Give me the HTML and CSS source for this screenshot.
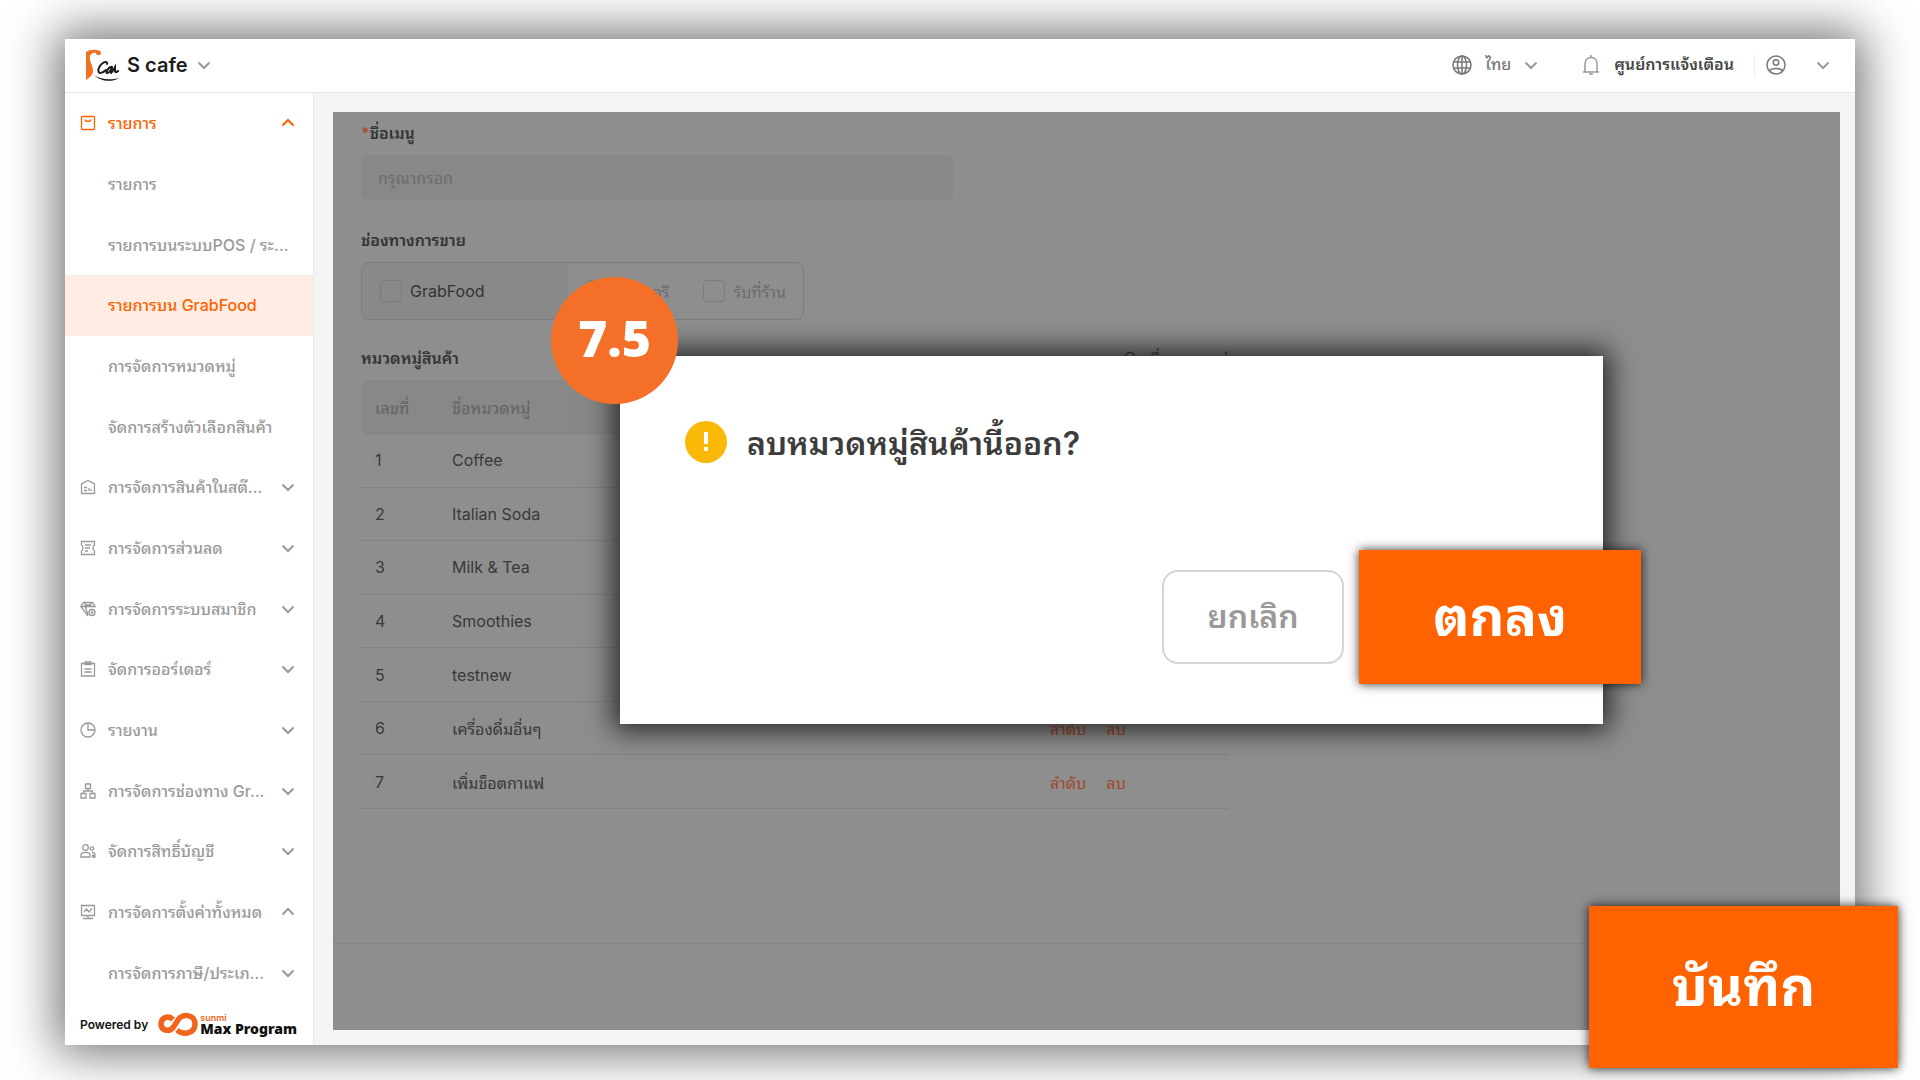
FILE: index.html
```html
<!DOCTYPE html>
<html lang="th">
<head>
    <meta charset="UTF-8">
    <meta name="viewport" content="width=device-width, initial-scale=1.0">
    <title>S cafe - รายการบน GrabFood</title>
    <link rel="stylesheet" href="styles.css">
</head>
<body>
    <!-- chevron shared by the header and the menu -->
    <svg class="defs" width="0" height="0">
        <symbol id="chevron" viewBox="0 0 14 14"><path d="M1.5 4.5L7 10L12.5 4.5" fill="none" stroke="currentColor" stroke-width="2"/></symbol>
    </svg>

    <div class="window">
        <header class="topbar">
            <svg class="logo" viewBox="0 0 34 32">
                <path d="M1 3C5 0 16 0 16 4C16 7 11 7 11 4C7 3 4 6 5 11C6 15 8 18 8 22C8 26 5 28 1 31Z" fill="#f37021"/>
                <path d="M22 15C23 11 16 13 13.5 20C12.5 26 18 24 21 21M27 18C24 17 20 24 22 24C24 24 26 21 27 18L26 24M27 23L30 18L30 22C30 24 32 23 33 22" fill="none" stroke="#1c1c1c" stroke-width="2" stroke-linecap="round"/>
                <path d="M9 26C16 31 26 31 34 29C26 34 15 32 9 26Z" fill="#1c1c1c"/>
            </svg>
            <button class="shop" type="button">S cafe <svg class="chevron"><use href="#chevron"/></svg></button>

            <button class="lang" type="button">
                <svg class="top-icon" viewBox="0 0 20 20" fill="none" stroke="currentColor" stroke-width="1.5"><circle cx="10" cy="10" r="9"/><ellipse cx="10" cy="10" rx="4.5" ry="9"/><path d="M1.5 7H18.5M1.5 13H18.5M10 1V19"/></svg>
                <span>ไทย</span>
                <svg class="chevron"><use href="#chevron"/></svg>
            </button>
            <button class="notice" type="button">
                <svg class="top-icon light" viewBox="0 0 20 20" fill="none" stroke="currentColor" stroke-width="1.5"><path d="M2 17H18M4 17V9C4 5 6.5 2.5 10 2.5S16 5 16 9V17M10 0V2.5M8 19H12"/></svg>
                <span>ศูนย์การแจ้งเตือน</span>
            </button>
            <button class="account" type="button" aria-label="บัญชี">
                <svg class="top-icon" viewBox="0 0 20 20" fill="none" stroke="currentColor" stroke-width="1.5"><circle cx="10" cy="10" r="9"/><circle cx="10" cy="7.5" r="2.7"/><path d="M3.5 16C5 12.5 15 12.5 16.5 16"/></svg>
                <svg class="chevron"><use href="#chevron"/></svg>
            </button>
        </header>

        <div class="body">
            <aside class="sidebar">
                <nav class="menu">
                    <a class="item open" href="#">
                        <svg class="icon" viewBox="0 0 16 16"><rect x="1.5" y="1.5" width="13" height="13" rx="1"/><path d="M5 4.5C5.5 7 10.5 7 11 4.5"/></svg>
                        <span>รายการ</span><svg class="chevron up"><use href="#chevron"/></svg>
                    </a>
                    <a class="item sub" href="#"><span>รายการ</span></a>
                    <a class="item sub" href="#"><span>รายการบนระบบPOS / ระ...</span></a>
                    <a class="item sub active" href="#"><span>รายการบน GrabFood</span></a>
                    <a class="item sub" href="#"><span>การจัดการหมวดหมู่</span></a>
                    <a class="item sub" href="#"><span>จัดการสร้างตัวเลือกสินค้า</span></a>
                    <a class="item" href="#">
                        <svg class="icon" viewBox="0 0 16 16"><path d="M1.5 14.5V5L8 1.5L14.5 5V14.5ZM4 8.5H7M4 11.5H7M9 9V12M11 10V12"/></svg>
                        <span>การจัดการสินค้าในสต๊...</span><svg class="chevron"><use href="#chevron"/></svg>
                    </a>
                    <a class="item" href="#">
                        <svg class="icon" viewBox="0 0 16 16"><path d="M1.5 1.5H14.5V5C12.5 6 12.5 10 14.5 11V14.5H1.5V11C3.5 10 3.5 6 1.5 5ZM5 5H11M5 8H10M5 11H8"/></svg>
                        <span>การจัดการส่วนลด</span><svg class="chevron"><use href="#chevron"/></svg>
                    </a>
                    <a class="item" href="#">
                        <svg class="icon" viewBox="0 0 16 16"><path d="M3.5 1.5H12.5L15 5.5H1ZM1 5.5L8 15M5 1.5L5.5 6L8 14M11 1.5L10.5 6M5.5 4L11 4"/><circle cx="12" cy="11.5" r="3"/><circle cx="12" cy="11.5" r=".7"/></svg>
                        <span>การจัดการระบบสมาชิก</span><svg class="chevron"><use href="#chevron"/></svg>
                    </a>
                    <a class="item" href="#">
                        <svg class="icon" viewBox="0 0 16 16"><path d="M1.5 2.5H14.5V15H1.5ZM5 .8H11V3.5H5ZM4.5 8H11.5M4.5 11H11.5"/></svg>
                        <span>จัดการออร์เดอร์</span><svg class="chevron"><use href="#chevron"/></svg>
                    </a>
                    <a class="item" href="#">
                        <svg class="icon" viewBox="0 0 16 16"><circle cx="8" cy="8" r="7"/><path d="M8 1V8H15"/></svg>
                        <span>รายงาน</span><svg class="chevron"><use href="#chevron"/></svg>
                    </a>
                    <a class="item" href="#">
                        <svg class="icon" viewBox="0 0 16 16"><path d="M5.5 1H10.5V5.5H5.5ZM1 10.5H6V15H1ZM10 10.5H15V15H10ZM8 5.5V8M3.5 10.5V8H12.5V10.5"/></svg>
                        <span>การจัดการช่องทาง Gr...</span><svg class="chevron"><use href="#chevron"/></svg>
                    </a>
                    <a class="item" href="#">
                        <svg class="icon" viewBox="0 0 16 16"><circle cx="5.5" cy="4.5" r="2.8"/><path d="M1 14V12C1 8.5 10 8.5 10 12V14ZM12 9.5C14 9.5 15 10.5 15 11.5M12 14H15V12.5H12"/><circle cx="12" cy="5.5" r="1.7"/></svg>
                        <span>จัดการสิทธิ์บัญชี</span><svg class="chevron"><use href="#chevron"/></svg>
                    </a>
                    <a class="item" href="#">
                        <svg class="icon" viewBox="0 0 16 16"><path d="M1.5 1.5H14.5V11.5H1.5ZM8 11.5V14.5M3 14.5H13M4 8L6.5 5L9 8L12 4.5"/></svg>
                        <span>การจัดการตั้งค่าทั้งหมด</span><svg class="chevron up"><use href="#chevron"/></svg>
                    </a>
                    <a class="item sub" href="#"><span>การจัดการภาษี/ประเภ...</span><svg class="chevron"><use href="#chevron"/></svg></a>
                </nav>
                <div class="powered">
                    <span>Powered by</span>
                    <svg class="sunmi" viewBox="0 0 40 24"><path d="M15 7.5C10 2.5 3 6 3 12C3 18 11 21 15.5 15L20 8C24 1 37 2 37 12C37 21 26 24 19 18" fill="none" stroke="#f26419" stroke-width="5.5"/></svg>
                    <div class="brand"><small>sunmi</small><b>Max Program</b></div>
                </div>
            </aside>

            <main class="content">
                <form class="panel" id="menuForm">
                    <div class="fields">
                        <label class="title" for="menuName"><i>*</i>ชื่อเมนู</label>
                        <input class="text-input" id="menuName" type="text" placeholder="กรุณากรอก">

                        <div class="title">ช่องทางการขาย</div>
                        <div class="channels">
                            <label class="channel main"><input type="checkbox">GrabFood</label>
                            <label class="channel"><input type="checkbox" disabled>เดลิเวอรี</label>
                            <label class="channel"><input type="checkbox" disabled>รับที่ร้าน</label>
                        </div>

                        <div class="table-head">
                            <div class="title">หมวดหมู่สินค้า</div>
                            <a class="add" href="#"><svg viewBox="0 0 14 14" fill="none" stroke="currentColor" stroke-width="1.5"><circle cx="6" cy="6" r="4.5"/><path d="M9.5 9.5L13 13"/></svg> ชื่อหมวดหมู่</a>
                        </div>
                        <table class="categories">
                            <thead>
                                <tr><th class="no">เลขที่</th><th class="name">ชื่อหมวดหมู่</th><th></th></tr>
                            </thead>
                            <tbody>
                                <tr><td>1</td><td>Coffee</td><td><a href="#">ลำดับ</a><a href="#">ลบ</a></td></tr>
                                <tr><td>2</td><td>Italian Soda</td><td><a href="#">ลำดับ</a><a href="#">ลบ</a></td></tr>
                                <tr><td>3</td><td>Milk &amp; Tea</td><td><a href="#">ลำดับ</a><a href="#">ลบ</a></td></tr>
                                <tr><td>4</td><td>Smoothies</td><td><a href="#">ลำดับ</a><a href="#">ลบ</a></td></tr>
                                <tr><td>5</td><td>testnew</td><td><a href="#">ลำดับ</a><a href="#">ลบ</a></td></tr>
                                <tr><td>6</td><td>เครื่องดื่มอื่นๆ</td><td><a href="#">ลำดับ</a><a href="#">ลบ</a></td></tr>
                                <tr><td>7</td><td>เพิ่มช็อตกาแฟ</td><td><a href="#">ลำดับ</a><a href="#">ลบ</a></td></tr>
                            </tbody>
                        </table>
                    </div>
                    <div class="panel-footer"></div>
                </form>
            </main>
        </div>

        <div class="modal" role="dialog" aria-labelledby="modalTitle">
            <div class="question">
                <svg class="warn" viewBox="0 0 42 42"><circle cx="21" cy="21" r="21" fill="#fbb907"/><path d="M21 11V23M21 26V30" stroke="#fff" stroke-width="4"/></svg>
                <h2 id="modalTitle">ลบหมวดหมู่สินค้านี้ออก?</h2>
            </div>
            <div class="actions">
                <button class="cancel" type="button">ยกเลิก</button>
                <button class="big ok" type="button">ตกลง</button>
            </div>
            <div class="step">7.5</div>
        </div>

        <button class="big save" type="submit" form="menuForm">บันทึก</button>
    </div>
</body>
</html>
```
FILE: styles.css
```css
* {
    box-sizing: border-box;
}

body {
    margin: 0;
    padding: 39px 65px 35px;
    height: 100vh;
    background: #fff;
    overflow: hidden;
    font-family: Inter, "Noto Sans Thai Looped", Loma, "Noto Sans", sans-serif;
    font-size: 16px;
    color: #333;
}

button {
    font: inherit;
    border: none;
    background: none;
    padding: 0;
    cursor: pointer;
}

a {
    text-decoration: none;
    color: inherit;
}

.defs {
    position: absolute;
}

.window {
    position: relative;
    display: flex;
    flex-direction: column;
    height: 100%;
    background: #f4f4f4;
    box-shadow: 0 0 46px 8px rgba(0, 0, 0, 0.56);
}

/* header */
.topbar {
    display: flex;
    align-items: center;
    height: 54px;
    padding: 0 25px 2px 20px;
    background: #fff;
    border-bottom: 1px solid #e6e6e6;
}

.topbar button {
    display: flex;
    align-items: center;
    color: #777;
}

.topbar span {
    line-height: 20px;
    padding-bottom: 2px;
}

.logo {
    width: 34px;
    height: 32px;
    margin-right: 8px;
}

.topbar .shop {
    gap: 9px;
    margin-right: auto;
    font-size: 20px;
    font-weight: 600;
    color: #1c1c1c;
}

.top-icon {
    width: 20px;
    height: 20px;
}

.light {
    color: #999;
}

.chevron {
    flex: none;
    width: 14px;
    height: 14px;
    color: #999;
}

.up {
    transform: rotate(180deg);
}

.topbar .lang {
    gap: 13px;
    margin-right: 43px;
    font-weight: 500;
}

.topbar .notice {
    gap: 13px;
    margin-right: 20px;
    font-weight: 600;
    color: #444;
}

.topbar .account {
    gap: 30px;
    padding-left: 11px;
    border-left: 1px solid #eee;
}

/* left menu */
.body {
    display: flex;
    flex: 1;
    min-height: 0;
}

.sidebar {
    display: flex;
    flex-direction: column;
    width: 249px;
    background: #fff;
    border-right: 1px solid #e8e8e8;
}

.menu {
    display: flex;
    flex-direction: column;
    flex: 1;
}

.item {
    display: flex;
    flex: 1;
    align-items: center;
    gap: 12px;
    padding: 0 18px 0 15px;
    font-weight: 500;
    color: #999;
}

.item span {
    flex: 1;
    white-space: nowrap;
    overflow: hidden;
    line-height: 32px;
}

.sub {
    padding-left: 43px;
}

.open, .open .chevron {
    color: #ff6000;
}

.active {
    background: #ffede3;
    color: #ff6000;
}

.icon {
    width: 16px;
    height: 16px;
    fill: none;
    stroke: currentColor;
    stroke-width: 1.3;
}

.powered {
    display: flex;
    align-items: center;
    height: 42px;
    padding-left: 15px;
    font-size: 12px;
    font-weight: 600;
    color: #111;
}

.sunmi {
    width: 40px;
    height: 24px;
    margin: 0 2px 0 10px;
}

.brand {
    display: flex;
    flex-direction: column;
}

.brand small {
    font-size: 9px;
    line-height: 9px;
    color: #f26419;
}

.brand b {
    font-family: "Noto Sans", sans-serif;
    font-size: 14px;
    font-weight: 900;
    line-height: 13px;
}

/* dimmed form */
.content {
    flex: 1;
    display: flex;
    padding: 19px 15px 15px 19px;
}

.panel {
    flex: 1;
    display: flex;
    flex-direction: column;
    background: #8e8e8e;
}

.fields {
    flex: 1;
    padding: 7px 28px;
}

.title {
    font-weight: 600;
    line-height: 28px;
    color: #333;
}

.title i {
    color: #a8502c;
    font-style: normal;
}

.text-input {
    display: block;
    width: 593px;
    height: 45px;
    margin: 8px 0 26px;
    padding: 0 17px;
    border: none;
    border-radius: 8px;
    background: #888;
    font: inherit;
}

.text-input::placeholder {
    color: #6c6c6c;
}

.channels {
    display: inline-flex;
    height: 58px;
    margin: 8px 0 24px;
    border: 1px solid #7c7c7c;
    border-radius: 8px;
    overflow: hidden;
}

.channel {
    display: flex;
    align-items: center;
    gap: 8px;
    padding: 0 17px;
    color: #6c6c6c;
}

.channel.main {
    width: 206px;
    padding: 0 18px;
    background: #898989;
    color: #333;
}

.channel input {
    appearance: none;
    width: 22px;
    height: 22px;
    margin: 0;
    border: 1px solid #7c7c7c;
    border-radius: 4px;
}

.table-head {
    display: flex;
    justify-content: space-between;
    width: 867px;
    margin-bottom: 8px;
}

.add {
    display: flex;
    align-items: center;
    gap: 12px;
    color: #444;
}

.add svg {
    width: 14px;
    height: 14px;
}

.categories {
    width: 867px;
    height: 429px;
    border-collapse: separate;
    border-spacing: 0;
    table-layout: fixed;
    color: #383838;
}

.categories th, .categories td {
    padding: 0 14px;
    border-bottom: 1px solid #828282;
    text-align: left;
}

.categories th {
    height: 54px;
    background: #888;
    color: #666;
    font-weight: 500;
}

.categories th:first-child {
    border-radius: 8px 0 0 8px;
}

.no {
    width: 77px;
}

.name {
    width: 598px;
}

.categories a {
    margin-right: 20px;
    color: #a04a28;
}

.panel-footer {
    height: 87px;
    border-top: 1px solid #868686;
}

/* confirm dialog */
.modal {
    position: absolute;
    top: 317px;
    left: 555px;
    width: 983px;
    height: 368px;
    padding: 54px 0 0 65px;
    background: #fff;
    box-shadow: 0 0 26px 6px rgba(0, 0, 0, 0.75);
}

.question {
    display: flex;
    align-items: center;
    gap: 20px;
    height: 64px;
}

.warn {
    width: 42px;
    height: 42px;
}

.question h2 {
    margin: 0;
    padding-bottom: 4px;
    font-size: 32px;
    font-weight: 600;
    color: #3c3c3c;
}

.actions {
    display: flex;
    align-items: center;
    justify-content: flex-end;
    gap: 15px;
    margin: 76px -38px 0 0;
}

.cancel {
    width: 182px;
    height: 94px;
    padding-bottom: 8px;
    border: 2px solid #d4d4d4;
    border-radius: 16px;
    font-size: 32px;
    font-weight: 600;
    color: #999;
}

.big {
    padding-bottom: 12px;
    background: #ff6200;
    color: #fff;
    font-size: 54px;
    font-weight: 700;
    box-shadow: 0 0 10px rgba(0, 0, 0, 0.8);
}

.ok {
    width: 282px;
    height: 134px;
}

.save {
    position: absolute;
    right: -43px;
    bottom: -23px;
    width: 309px;
    height: 162px;
}

.step {
    position: absolute;
    top: -79px;
    left: -69px;
    width: 127px;
    height: 127px;
    border-radius: 50%;
    background: #f47028;
    color: #fff;
    font-family: "Open Sans", sans-serif;
    font-size: 50px;
    font-weight: 800;
    line-height: 122px;
    text-align: center;
}
```
